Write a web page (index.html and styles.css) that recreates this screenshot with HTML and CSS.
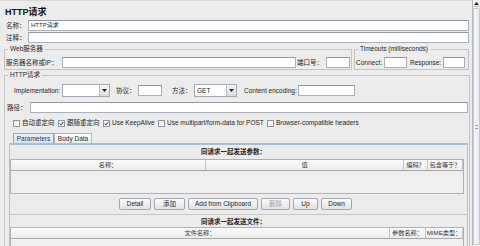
FILE: index.html
```html
<!DOCTYPE html>
<html>
<head>
<meta charset="utf-8">
<link rel="stylesheet" href="styles.css">
</head>
<body>
<div class="app">
  <div class="main">
    <div class="title">HTTP请求</div>
    <div class="row r-name"><span class="lbl l-name">名称：</span><span class="inp grow">HTTP请求</span></div>
    <div class="row r-comment"><span class="lbl l-name">注释：</span><span class="inp grow"></span></div>
    <div class="fs-row">
      <fieldset class="fs fs-web">
        <legend>Web服务器</legend>
        <div class="row r-in">
          <span class="lbl l-server">服务器名称或IP：</span><span class="inp grow"></span>
          <span class="lbl l-port">端口号：</span><span class="inp w-port"></span>
        </div>
      </fieldset>
      <fieldset class="fs fs-time">
        <legend>Timeouts (milliseconds)</legend>
        <div class="row r-in">
          <span class="lbl l-connect">Connect:</span><span class="inp w-connect"></span>
          <span class="lbl l-response">Response:</span><span class="inp w-response"></span>
        </div>
      </fieldset>
    </div>
    <fieldset class="fs fs-http">
      <legend>HTTP请求</legend>
      <div class="row r-impl">
        <span class="lbl l-impl">Implementation:</span>
        <span class="combo w-impl"><span class="combo-field"></span><span class="combo-btn"><svg width="5" height="3" viewBox="0 0 5 3"><polygon points="0,0 5,0 2.5,3" fill="#222"/></svg></span></span>
        <span class="lbl l-proto">协议：</span><span class="inp w-proto"></span>
        <span class="lbl l-method">方法：</span>
        <span class="combo w-method"><span class="combo-field">GET</span><span class="combo-btn"><svg width="5" height="3" viewBox="0 0 5 3"><polygon points="0,0 5,0 2.5,3" fill="#222"/></svg></span></span>
        <span class="lbl l-enc">Content encoding:</span><span class="inp w-enc"></span>
      </div>
      <div class="row r-path"><span class="lbl l-path">路径：</span><span class="inp grow"></span></div>
      <div class="row r-checks">
        <span class="chk c1"><span class="cb"></span>自动重定向</span>
        <span class="chk c2"><span class="cb"><svg width="5" height="5" viewBox="0 0 5 5"><path d="M0.6 2.6 L1.9 4 L4.4 0.8" fill="none" stroke="#222" stroke-width="0.9"/></svg></span>跟随重定向</span>
        <span class="chk c3"><span class="cb"><svg width="5" height="5" viewBox="0 0 5 5"><path d="M0.6 2.6 L1.9 4 L4.4 0.8" fill="none" stroke="#222" stroke-width="0.9"/></svg></span>Use KeepAlive</span>
        <span class="chk c4"><span class="cb"></span>Use multipart/form-data for POST</span>
        <span class="chk c5"><span class="cb"></span>Browser-compatible headers</span>
      </div>
      <div class="tabs">
        <span class="tab tab-on">Parameters</span>
        <span class="tab">Body Data</span>
      </div>
      <div class="panel">
        <div class="caption">同请求一起发送参数：</div>
        <div class="tbl tbl-params">
          <div class="thead">
            <span class="th c-name">名称：</span>
            <span class="th c-val">值</span>
            <span class="th c-enc">编码？</span>
            <span class="th c-eq">包含等于？</span>
          </div>
          <div class="tbody"></div>
        </div>
        <div class="btnrow">
          <span class="btn b-detail">Detail</span>
          <span class="btn b-add">添加</span>
          <span class="btn b-clip">Add from Clipboard</span>
          <span class="btn b-del disabled">删除</span>
          <span class="btn b-up">Up</span>
          <span class="btn b-down">Down</span>
        </div>
        <div class="caption caption2">同请求一起发送文件：</div>
        <div class="tbl tbl-files">
          <div class="thead">
            <span class="th c-file">文件名称：</span>
            <span class="th c-param">参数名称：</span>
            <span class="th c-mime">MIME类型：</span>
          </div>
          <div class="tbody"></div>
        </div>
      </div>
    </fieldset>
  </div>
  <div class="scroll">
    <span class="sc-up"><svg width="5" height="3" viewBox="0 0 5 3"><polygon points="0,3 5,3 2.5,0" fill="#222"/></svg></span>
    <span class="sc-track"><span class="sc-thumb"><span class="grip"></span></span></span>
  </div>
</div>
</body>
</html>
```
FILE: styles.css
```css
* { box-sizing: border-box; margin: 0; padding: 0; }
html, body { width: 480px; height: 246px; overflow: hidden; }
body {
  background: #ececec;
  font-family: "Liberation Sans", "Noto Sans CJK SC", sans-serif;
  font-size: 6.5px;
  line-height: 8px;
  color: #1e1e1e;
}
.app { display: flex; height: 246px; overflow: hidden; }
.main {
  flex: 1;
  display: flex;
  flex-direction: column;
  padding: 0 3px 0 4px;
  border-top: 1px solid #d9d9d9;
  overflow: hidden;
}
.title {
  font-size: 9px;
  font-weight: bold;
  line-height: 12px;
  height: 12px;
  margin: 5px 0 2px 1px;
  color: #111;
}
.row { display: flex; align-items: center; }
.grow { flex: 1; }
.lbl { white-space: nowrap; flex: none; }
.inp {
  display: block;
  height: 11px;
  background: #fff;
  border: 1px solid #a9b0ba;
  border-top-color: #8f969f;
  padding-left: 2px;
  line-height: 9px;
  font-size: 6px;
  white-space: nowrap;
  overflow: hidden;
}
.r-name { height: 11px; }
.r-comment { height: 11px; margin-top: 1px; }
.l-name { width: 24px; padding-left: 2px; }

.fs-row { display: flex; gap: 2px; margin-top: 2px; flex: none; }
.fs {
  border: 1px solid #c4c4c4;
  min-width: 0;
  padding: 4px 1px 1px 1px;
}
.fs legend {
  padding: 0 2px;
  margin-left: 2px;
  line-height: 8px;
  font-size: 6.5px;
}
.fs-web { width: 348px; }
.fs-time { flex: 1; }
.r-in { height: 11px; }
.l-server { width: 56px; }
.l-port { width: 30px; padding-left: 1px; }
.w-port { width: 24px; }
.l-connect { width: 28px; }
.w-connect { width: 23px; }
.l-response { width: 33px; margin-left: 3px; }
.w-response { width: 22px; }

.fs-http {
  margin-top: 1px;
  margin-right: -1px;
  padding: 0 1px 0 1px;
  height: 200px;
  flex: none;
}
.r-impl { height: 13px; margin-top: 5px; padding-left: 8px; }
.l-impl { width: 48px; }
.combo {
  display: flex;
  height: 13px;
  border: 1px solid #a2a9b3;
  background: #fff;
}
.combo-field { flex: 1; padding-left: 2px; line-height: 11px; font-size: 6.5px; }
.combo-btn {
  width: 10px;
  display: flex;
  align-items: center;
  justify-content: center;
  background: linear-gradient(#f6f6f6, #dcdcdc);
  border-left: 1px solid #b5bcc5;
}
.w-impl { width: 48px; }
.l-proto { width: 22px; margin-left: 6px; }
.w-proto { width: 24px; height: 11px; }
.l-method { width: 22px; margin-left: 10px; }
.w-method { width: 43px; }
.l-enc { width: 54px; margin-left: 7px; }
.w-enc { width: 57px; }

.r-path { height: 11px; margin-top: 5px; }
.l-path { width: 24px; padding-left: 1px; }

.r-checks { height: 10px; margin-top: 5px; padding-left: 7px; }
.chk { display: flex; align-items: center; white-space: nowrap; flex: none; }
.cb {
  width: 7px;
  height: 7px;
  border: 1px solid #8e96a0;
  background: linear-gradient(#f0f0f0, #fff);
  margin-right: 2px;
  display: flex;
  align-items: center;
  justify-content: center;
}
.c1 { width: 45px; }
.c2 { width: 45px; }
.c3 { width: 55px; }
.c4 { width: 109px; }

.tabs { display: flex; height: 10px; margin-top: 5px; padding-left: 7px; }
.tab {
  height: 10px;
  line-height: 9px;
  text-align: center;
  border: 1px solid #b3b9c2;
  border-bottom: none;
  background: linear-gradient(#fafafa, #ececec);
  color: #2a2a2a;
}
.tab:first-child { width: 41px; }
.tab:nth-child(2) { width: 38px; }
.tab-on {
  background: linear-gradient(#eef4fb, #d4e2f3);
  border-color: #8fa7c6;
  color: #1d3660;
}
.panel {
  margin-left: 3px;
  border: 1px solid #b9c0c9;
  border-top: 2px solid #a9bcd8;
  height: 120px;
  display: flex;
  flex-direction: column;
}
.caption {
  height: 14px;
  line-height: 14px;
  text-align: center;
  font-weight: bold;
  color: #222;
  padding-right: 10px;
}
.caption2 { height: 13px; line-height: 13px; border-top: 1px solid #c6c6c6; }
.tbl {
  border: 1px solid #b1b1b1;
  margin-right: 3px;
  background: #efefef;
}
.tbl-params { height: 35px; }
.tbl-files { flex: 1; }
.thead { display: flex; height: 11px; }
.th {
  display: block;
  text-align: center;
  line-height: 10px;
  background: linear-gradient(#fbfbfb, #ededed);
  border-right: 1px solid #c2c2c2;
  border-bottom: 1px solid #a8a8a8;
  color: #333;
  white-space: nowrap;
  font-size: 6.2px;
}
.c-name { width: 195px; }
.c-val { width: 198px; }
.c-enc { width: 24px; }
.c-eq { flex: 1; }
.c-file { width: 379px; }
.c-param { width: 36px; }
.c-mime { flex: 1; }

.btnrow {
  height: 20px;
  display: flex;
  align-items: center;
  justify-content: center;
  gap: 3px;
  padding-right: 6px;
}
.btn {
  height: 12px;
  line-height: 10px;
  text-align: center;
  border: 1px solid #9ea6b2;
  border-radius: 2px;
  background: linear-gradient(#fdfdfd, #e1e1e1);
  color: #1e1e1e;
  white-space: nowrap;
}
.b-detail { width: 32px; }
.b-add { width: 31px; }
.b-clip { width: 70px; }
.b-del { width: 29px; }
.b-up { width: 25px; }
.b-down { width: 31px; }
.disabled { color: #a3a3a3; }

.scroll {
  width: 8px;
  flex: none;
  border-left: 1px solid #b9b9b9;
  background: #f3f3f3;
  display: flex;
  flex-direction: column;
}
.sc-up {
  height: 7px;
  display: flex;
  align-items: center;
  justify-content: center;
  border-bottom: 1px solid #c8c8c8;
}
.sc-track { flex: 1; display: flex; padding: 1px 0; }
.sc-thumb {
  flex: 1;
  border: 1px solid #c3cad3;
  border-radius: 1px;
  background: linear-gradient(90deg, #f6f8fb, #e6ebf1);
  display: flex;
  align-items: center;
  justify-content: center;
}
.grip {
  width: 3px;
  height: 4px;
  border-top: 1px solid #9aa3ad;
  border-bottom: 1px solid #9aa3ad;
}
```
